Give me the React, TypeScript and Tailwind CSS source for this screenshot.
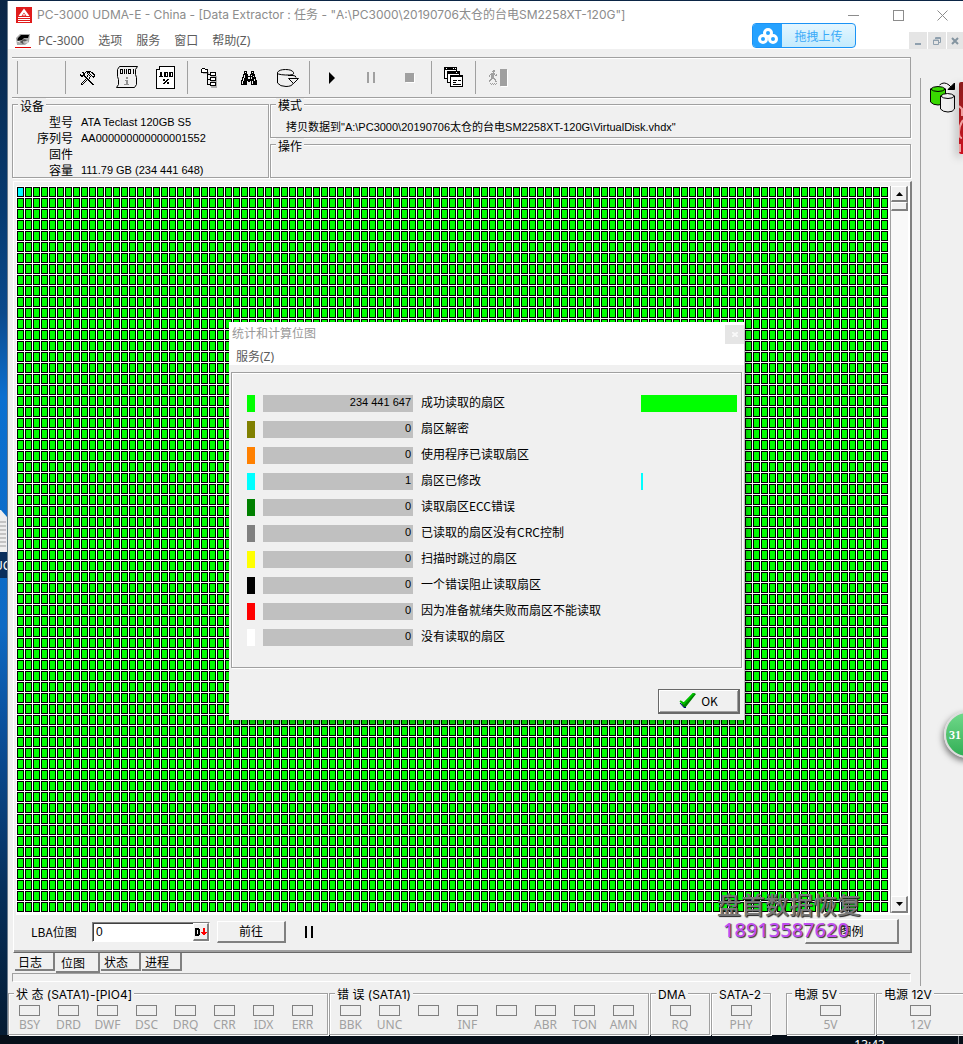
import { useState } from 'react';
import type { ReactNode } from 'react';

interface SectorStat {
  label: string;
  count: string;
  color: string;
  bar?: number;
}

const stats: SectorStat[] = [
  { label: '成功读取的扇区', count: '234 441 647', color: 'bg-[#00ff00]', bar: 96 },
  { label: '扇区解密', count: '0', color: 'bg-[#808000]' },
  { label: '使用程序已读取扇区', count: '0', color: 'bg-[#ff8000]' },
  { label: '扇区已修改', count: '1', color: 'bg-[#00ffff]', bar: 2 },
  { label: '读取扇区ECC错误', count: '0', color: 'bg-[#008000]' },
  { label: '已读取的扇区没有CRC控制', count: '0', color: 'bg-[#808080]' },
  { label: '扫描时跳过的扇区', count: '0', color: 'bg-[#ffff00]' },
  { label: '一个错误阻止读取扇区', count: '0', color: 'bg-black' },
  { label: '因为准备就绪失败而扇区不能读取', count: '0', color: 'bg-[#ff0000]' },
  { label: '没有读取的扇区', count: '0', color: 'bg-white' },
];

const device = [
  ['型号', 'ATA Teclast 120GB S5'],
  ['序列号', 'AA000000000000001552'],
  ['固件', ''],
  ['容量', '111.79 GB (234 441 648)'],
];

// one character per pixel: # ink, o grey, . empty
const Bitmap = ({ rows, ink = '#000' }: { rows: string[]; ink?: string }) => (
  <svg
    width={rows[0].length}
    height={rows.length}
    shapeRendering="crispEdges"
    aria-hidden="true"
  >
    {rows.map((row, y) =>
      row.split('').map((c, x) =>
        c === '.' ? null : (
          <rect
            key={`${x}-${y}`}
            x={x}
            y={y}
            width="1"
            height="1"
            fill={c === 'o' ? '#808080' : ink}
          />
        )
      )
    )}
  </svg>
);

const TOOLS = [
  '......#####.....',
  '..##.#.###.##...',
  '...##..#.#..##..',
  '#..##...#.#..##.',
  '#####..#.#.#..#.',
  '.##.##.#..#.###.',
  '.....##..#...#..',
  '......##.#......',
  '.....#.##.......',
  '....#.#.##......',
  '...#.#...##.....',
  '..#.#.....##....',
  '.#.#.......##...',
  '.##.........##..',
];

const BINOCULARS = [
  '...###....###...',
  '...#.#....#.#...',
  '...###....###...',
  '..#####..#####..',
  '..#.###..#.###..',
  '..#.########.#..',
  '.##.###..#.####.',
  '.#.####..#.####.',
  '.#.##########.#.',
  '##.##########.##',
  '#.####.##.#.####',
  '#.####....#.####',
  '#.####....#.####',
  '######....######',
];

const RUNNER = [
  '....##...',
  '...###...',
  '....#....',
  '..####...',
  '.#####.#.',
  '#.###.##.',
  '#.###....',
  '..###....',
  '..####...',
  '.##..##..',
  '##....#..',
  '#.....##.',
];

const ToolsIcon = () => <Bitmap rows={TOOLS} />;
const BinocularsIcon = () => <Bitmap rows={BINOCULARS} />;

const ScrollIcon = () => (
  <svg width="22" height="23" viewBox="0 0 22 23" fill="none" aria-hidden="true">
    <path
      d="M3.500 .5H21.500L19.500 3.500V8.500L20.500 11.500V18.500L18.500 21.500H.5L2.500 18.500V13.500L1.500 10.500V3.500Z"
      fill="#f0f0f0"
      stroke="#000"
    />
    <g shapeRendering="crispEdges" fill="none" stroke="#000">
      <rect x="4.500" y="3.500" width="2" height="4" />
      <path d="M8.500 3V8M10.500 3V8M17.500 3V8" />
      <rect x="12.500" y="3.500" width="2" height="4" />
    </g>
    <path d="M10 11h2v2h-2zM9 14h3v4h1v1H8v-1h2v-3H9z" fill="#909090" shapeRendering="crispEdges" />
  </svg>
);

const PercentIcon = () => (
  <svg width="19" height="23" viewBox="0 0 19 23" shapeRendering="crispEdges" aria-hidden="true">
    <path d="M3 0H19V23H0V3H3Z" fill="#000" />
    <path d="M4 1H18V22H1V4H4Z" fill="#fff" />
    <path
      d="M4 6h2v4h1v1H3v-1h1V7H3zM8 6h4v5H8zM13 6h4v5h-4zM7 13h2v2H7zM11 13h2v1h-2zM10 14h2v1h-2zM9 15h2v1H9zM8 16h2v1H8zM7 17h2v1H7zM11 16h2v2h-2z"
      fill="#000"
    />
    <path d="M10 7h1v3h-1zM15 7h1v3h-1z" fill="#fff" />
  </svg>
);

const TreeIcon = () => (
  <svg width="17" height="20" viewBox="0 0 17 20" shapeRendering="crispEdges" aria-hidden="true">
    <path d="M2 4h6v2H2zM10 8h6v12h-6z" fill="#b0b0b0" />
    <g fill="#fff" stroke="#000">
      <path d="M.5 1.500L1.500.5H3.500L4.500 1.500H6.500V4.500H.5Z" />
      <path d="M6.500 4V16.500H9M6.500 6.500H9M6.500 11.500H9" fill="none" />
      <path d="M9.500 4.500H14.500V7.500H9.500ZM9.500 9.500H14.500V12.500H9.500ZM9.500 14.500H14.500V17.500H9.500Z" />
    </g>
  </svg>
);

const DriveIcon = () => (
  <svg width="22" height="18" viewBox="0 0 22 18" fill="none" stroke="#000" aria-hidden="true">
    <path d="M.5 3.500V14Q3 17.500 9 17.500T16.500 14V13M.5 3.500Q2 .5 8.500.5T16.500 3.500 8.500 6 .5 3.500Z" />
    <path d="M11 6.500H16Q19 6.500 19 8.500M11.500 9.500H21.500L16.500 14.500Z" fill="#f0f0f0" />
  </svg>
);

const WindowsIcon = () => (
  <svg width="20" height="21" viewBox="0 0 20 21" shapeRendering="crispEdges" aria-hidden="true">
    <g fill="#fff" stroke="#000">
      <rect x=".5" y=".5" width="12" height="11" />
      <rect x="3.500" y="4.500" width="12" height="11" />
      <rect x="6.500" y="8.500" width="12" height="11" />
    </g>
    <path d="M1 1h11v2H1zM4 5h11v2H4zM7 9h11v1H7zM9 13h4v1H9zM14 13h3v1h-3zM9 15h3v1H9zM9 17h8v1H9z" />
    <path d="M2 1h1v1H2zM9 1h1v1H9zM11 1h1v1h-1zM12 5h1v1h-1z" fill="#fff" />
  </svg>
);

const ExitIcon = () => (
  <div className="flex gap-[2px]">
    <div className="pt-px">
      <Bitmap
        rows={[...RUNNER, '.........', '.#.#.#.#.', '..#.#.#..']}
        ink="#a0a0a0"
      />
    </div>
    <div className="h-[17px] w-[7px] bg-[#a0a0a0] shadow-[1px_1px_0_#fff]" />
  </div>
);

const Logo = () => (
  <svg width="16" height="16" viewBox="0 0 16 16" aria-hidden="true">
    <rect width="16" height="16" fill="#e01b1b" />
    <path d="M8 1.500L13.500 9H10.500L8 5.500 5.500 9H2.500ZM2 10h12v1H2zM2 12h12v1H2zM2 14h12v1H2z" fill="#fff" />
    <path d="M6.500 8.500L8 6.500 9.500 8.500Z" fill="#fff" />
  </svg>
);

const MenuLogo = () => (
  <svg width="16" height="14" viewBox="0 0 16 14" aria-hidden="true">
    <path d="M1 4L5 0H15L14 8 10 11H2Z" fill="#a8a8a8" />
    <path d="M3 4L6 1H14L13 4 9 4 7 6 2 7Z" fill="#000" />
    <path d="M5 8L9 5 12 6 8 10Z" fill="#555" />
    <path d="M2 7L5 8M8 8H13" stroke="#eee" />
    <path d="M0 13H16V14H0Z" fill="#e00000" />
  </svg>
);

const CopyDrivesIcon = () => (
  <svg width="26" height="31" viewBox="0 0 26 31" stroke="#000" aria-hidden="true">
    <path d="M.5 7V20Q3 23 8 23T15.500 20V7Q13 4.500 8 4.500T.5 7Z" fill="#38d800" />
    <path d="M.5 7Q3 9.500 8 9.500T15.500 7" fill="none" />
    <path d="M10.500 14V27Q13 30 18 30T24.500 27V14Q22 11.500 17.500 11.500T10.500 14Z" fill="#f0f0f0" />
    <path d="M10.500 14Q13 16.500 18 16.500T24.500 14" fill="none" />
    <path d="M9.500 3Q14 -1 19 3L21 5" fill="none" />
    <path d="M24.500 1V7.500H18Z" fill="#000" />
  </svg>
);

const toolbar: { name: string; icon: ReactNode; disabled?: boolean }[][] = [
  [
    { name: '工具', icon: <ToolsIcon /> },
    { name: '信息', icon: <ScrollIcon /> },
    { name: '百分比', icon: <PercentIcon /> },
  ],
  [
    { name: '结构', icon: <TreeIcon /> },
    { name: '查找', icon: <BinocularsIcon /> },
    { name: '驱动器', icon: <DriveIcon /> },
  ],
  [
    {
      name: '开始',
      icon: (
        <svg width="6" height="12" aria-hidden="true">
          <path d="M0 0L6 6L0 12Z" />
        </svg>
      ),
    },
    {
      name: '暂停',
      icon: <span className="block h-[11px] w-2 border-x-2 border-[#a0a0a0]" />,
      disabled: true,
    },
    {
      name: '停止',
      icon: <span className="block size-[9px] bg-[#a0a0a0] shadow-[1px_1px_0_#fff]" />,
      disabled: true,
    },
  ],
  [{ name: '窗口', icon: <WindowsIcon /> }],
  [{ name: '退出', icon: <ExitIcon />, disabled: true }],
];

const Toolbar = () => (
  <div className="mr-px flex h-[41px] items-stretch border-y border-r border-[#a0a0a0] py-[3px] pl-[5px] shadow-[0_1px_0_#fff,inset_0_1px_0_#fff]">
    <div className="w-12 border-l border-[#a0a0a0]" />
    {toolbar.map((group, i) => (
      <div key={i} className="flex items-center border-l border-[#a0a0a0] px-[2px]">
        {group.map((item) => (
          <button
            key={item.name}
            aria-label={item.name}
            disabled={item.disabled}
            className="flex h-8 w-[39px] items-center justify-center"
          >
            {item.icon}
          </button>
        ))}
      </div>
    ))}
  </div>
);

interface GroupProps {
  title?: string;
  className?: string;
  children?: ReactNode;
}

const Group = ({ title, className = '', children }: GroupProps) => (
  <section
    className={`relative border border-[#a0a0a0] shadow-[1px_1px_0_#fff,inset_1px_1px_0_#fff] ${className}`}
  >
    {title && (
      <h2 className="absolute -top-[7px] left-[5px] whitespace-nowrap bg-[#f0f0f0] px-[2px] text-[12px] leading-4">
        {title}
      </h2>
    )}
    {children}
  </section>
);

const Leds = ({ names }: { names: string[] }) => (
  <div
    className={`flex pt-[11px] font-['Noto_Sans',sans-serif] ${
      names.length > 1 ? 'pl-px' : 'justify-center'
    }`}
  >
    {names.map((name, i) => (
      <div key={i} className="flex w-[39px] flex-col items-center text-[#a0a0a0]">
        <span className="h-[11px] w-[21px] border border-[#808080]" />
        <span className="leading-[18px]">{name}</span>
      </div>
    ))}
  </div>
);

const SectorMap = () => (
  <svg className="h-[727px] min-w-0 flex-1 bg-white" shapeRendering="crispEdges" role="img" aria-label="位图">
    <defs>
      <pattern id="sector" x="1" y="1" width="8" height="11" patternUnits="userSpaceOnUse">
        <rect width="7" height="10" fill="#000" />
        <rect x="1" y="1" width="5" height="8" fill="#00ff00" />
      </pattern>
    </defs>
    <rect x="1" y="1" width="100%" height="100%" fill="url(#sector)" />
    <rect x="2" y="2" width="5" height="8" fill="#00ffff" />
  </svg>
);

const raised =
  'bg-[#f0f0f0] border-t border-l border-t-white border-l-white border-r-2 border-b-2 border-r-[#808080] border-b-[#808080]';

const ScrollBar = () => (
  <div className="ml-px mr-[2px] flex w-[18px] flex-col border-l border-[#a0a0a0] bg-[#f8f8f8]">
    <button aria-label="向上" className={`flex h-4 items-center justify-center ${raised}`}>
      <svg width="7" height="4" aria-hidden="true">
        <path d="M0 4L3.500 0L7 4Z" />
      </svg>
    </button>
    <div className={`h-[9px] ${raised}`} />
    <div className="flex-1" />
    <button aria-label="向下" className={`flex h-[17px] items-center justify-center ${raised}`}>
      <svg width="7" height="4" aria-hidden="true">
        <path d="M0 0L3.500 4L7 0Z" />
      </svg>
    </button>
  </div>
);

const BitmapPanel = () => {
  const [lba, setLba] = useState('0');

  return (
    <div className="ml-px mt-[3px] border-b border-l border-r-2 border-t border-b-[#696969] border-l-white border-r-[#808080] border-t-white">
      <div className="border-b-2 border-[#a0a0a0] pl-[2px] pt-1">
        <div className="flex bg-white pb-[2px]">
          <SectorMap />
          <ScrollBar />
        </div>
        <div className="flex h-[35px] items-center pb-[2px] pr-[11px]">
          <label htmlFor="lba" className="w-[76px] pl-[15px]">
            LBA位图
          </label>
          <div className="flex h-5 w-[118px] border border-b-white border-l-[#808080] border-r-white border-t-[#808080] bg-white">
            <input
              id="lba"
              value={lba}
              onChange={(e) => setLba(e.target.value)}
              className="min-w-0 flex-1 border-l border-t border-[#404040] px-[2px] font-['Liberation_Sans'] outline-none"
            />
            <button aria-label="十进制" className={`flex w-4 items-center justify-center ${raised}`}>
              <svg width="12" height="9" shapeRendering="crispEdges" aria-hidden="true">
                <path d="M0 1H4V2H5V8H4V9H0ZM2 3V7H3V3Z" fillRule="evenodd" />
                <path d="M8 1H10V5H12V6H11V7H10V8H8V7H7V6H6V5H8Z" fill="#f00" />
              </svg>
            </button>
          </div>
          <button className={`ml-[7px] h-[22px] w-[69px] ${raised}`}>前往</button>
          <button aria-label="暂停" className="ml-[19px] h-3 w-2 border-x-2 border-black" />
          <button className={`ml-auto h-[25px] w-[94px] ${raised}`}>图例</button>
        </div>
      </div>
    </div>
  );
};

const tabs = ['日志', '位图', '状态', '进程'];

const Tabs = () => {
  const [active, setActive] = useState('位图');

  return (
    <div role="tablist" className="flex h-5 items-start gap-px pl-[3px]">
      {tabs.map((tab) => (
        <button
          key={tab}
          role="tab"
          aria-selected={tab === active}
          onClick={() => setActive(tab)}
          className={`border-b-2 border-r-2 border-b-[#808080] border-r-[#808080] pr-2 ${
            tab === active ? 'h-5 w-11 pt-px' : 'h-[18px] w-10'
          }`}
        >
          {tab}
        </button>
      ))}
    </div>
  );
};

const TitleBar = () => (
  <header className="bg-white font-['Noto_Sans','Noto_Sans_CJK_SC',sans-serif]">
    <div className="flex h-7 items-center pl-2 text-[#8c8c8c]">
      <Logo />
      <h1 className="ml-[5px] whitespace-nowrap font-['Inter','Noto_Sans_CJK_SC',sans-serif]">
        PC-3000 UDMA-E - China - [Data Extractor : 任务 - "A:\PC3000\20190706太仓的台电SM2258XT-120G"]
      </h1>
      <div className="ml-auto flex">
        <button aria-label="最小化" className="flex h-7 w-[45px] items-center justify-center">
          <span className="h-px w-[11px] bg-[#8c8c8c]" />
        </button>
        <button aria-label="最大化" className="flex h-7 w-[45px] items-center justify-center">
          <span className="size-[11px] border border-[#8c8c8c]" />
        </button>
        <button aria-label="关闭" className="flex h-7 w-[42px] items-center justify-center">
          <svg width="11" height="11" stroke="#8c8c8c" aria-hidden="true">
            <path d="M.5 .5L10.500 10.500M10.500 .5L.5 10.500" />
          </svg>
        </button>
      </div>
    </div>
    <div className="flex h-5 items-end">
      <nav className="flex items-center gap-[14px] pl-[7px] leading-4 text-[#5c5c5c]">
        <button className="flex items-center gap-[7px]">
          <MenuLogo />
          PC-3000
        </button>
        <button>选项</button>
        <button>服务</button>
        <button>窗口</button>
        <button>帮助(Z)</button>
      </nav>
      <div className="ml-auto flex gap-px">
        <button aria-label="最小化文档" className="flex h-[17px] w-[18px] items-end justify-center bg-[#e5e5e5] pb-1">
          <span className="h-[2px] w-[6px] bg-[#8fa0ae]" />
        </button>
        <button aria-label="还原文档" className="flex h-[17px] w-[18px] items-center justify-center bg-[#e5e5e5]">
          <svg width="8" height="8" fill="none" stroke="#8fa0ae" aria-hidden="true">
            <path d="M2.500 2V.5H7.500V5.500H6M.5 3H5.500V7.500H.5ZM0 3.500H6M2 1.500H8" />
          </svg>
        </button>
        <button aria-label="关闭文档" className="flex h-[17px] w-4 items-center justify-center bg-[#e5e5e5]">
          <svg width="8" height="8" stroke="#8494a0" strokeWidth="2" aria-hidden="true">
            <path d="M1 1L7 7M7 1L1 7" />
          </svg>
        </button>
      </div>
    </div>
  </header>
);

const StatsDialog = () => (
  <div
    role="dialog"
    aria-labelledby="stats-title"
    className="absolute left-[229px] top-[322px] w-[515px] bg-[#f0f0f0] pb-[6px] shadow-[3px_3px_8px_rgba(0,0,0,0.35)]"
  >
    <div className="h-[43px] bg-white font-['Noto_Sans','Noto_Sans_CJK_SC',sans-serif]">
      <div className="flex h-[22px] items-center justify-between pl-[3px] pt-[2px]">
        <h2 id="stats-title" className="text-[#999]">
          统计和计算位图
        </h2>
        <button aria-label="关闭" className="flex h-[19px] w-[19px] items-center justify-center bg-[#e5e5e5]">
          <svg width="6" height="5" stroke="#f8f8f8" strokeWidth="2" aria-hidden="true">
            <path d="M0 0L6 5M6 0L0 5" />
          </svg>
        </button>
      </div>
      <button className="ml-[7px] block pt-[5px] leading-4 text-[#5c5c5c]">服务(Z)</button>
    </div>
    <Group className="mx-[2px] mt-[7px] flex h-[296px] flex-col gap-[9px] pl-[15px] pr-1 pt-[22px]">
      {stats.map((stat) => (
        <div key={stat.label} className="flex h-[17px] gap-2 leading-[14px]">
          <span className={`w-2 ${stat.color}`} />
          <span className="w-[150px] bg-[#c0c0c0] pr-[2px] text-right font-['Liberation_Sans'] text-[11px]">
            {stat.count}
          </span>
          <span>{stat.label}</span>
          <span className="ml-auto w-24">
            {stat.bar && <span className={`block h-full ${stat.color}`} style={{ width: stat.bar }} />}
          </span>
        </div>
      ))}
    </Group>
    <div className="mr-1 mt-[21px] flex justify-end">
      <button className="flex h-[25px] w-[82px] items-center justify-center gap-1 border-b-2 border-l border-r-2 border-t border-[#696969] shadow-[inset_1px_1px_0_#fff,inset_-1px_-1px_0_#a0a0a0]">
        <svg width="18" height="16" aria-hidden="true">
          <path d="M1 8L5 9.500L15 0L17 1L6 15H5Z" fill="#008000" />
          <path d="M1 8L5 10.500L15 0" stroke="#00c000" strokeWidth="2" fill="none" />
          <path d="M1 10L5 14.500H7" stroke="#000080" fill="none" />
        </svg>
        OK
      </button>
    </div>
  </div>
);

const UploadWidget = () => (
  <button className="absolute left-[752px] top-[23px] flex h-[25px] w-[104px] items-stretch overflow-hidden rounded-[4px] border border-[#1b93f5] bg-linear-to-b from-[#e4f6ff] to-[#c4ebfd] text-[#3aaaf8]">
    <span className="flex w-[29px] items-center justify-center bg-[#26a2ff]">
      <svg width="20" height="16" fill="none" stroke="#fff" strokeWidth="3" aria-hidden="true">
        <circle cx="10" cy="5" r="3.500" />
        <circle cx="5" cy="11" r="3.500" />
        <circle cx="15" cy="11" r="3.500" />
      </svg>
    </span>
    <span className="flex flex-1 items-center justify-center">拖拽上传</span>
  </button>
);

const Watermark = () => (
  <div className="pointer-events-none absolute left-[717px] top-[890px] whitespace-nowrap">
    <p className="text-[24px] font-medium leading-7 text-[#777] [text-shadow:1px_1px_1px_#222]">
      盘首数据恢复
    </p>
    <p className="pl-[6px] font-['Noto_Sans'] text-[20px] font-medium leading-6 text-[#c04cf0] [text-shadow:1px_1px_1px_#333]">
      18913587620
    </p>
  </div>
);

const App = () => {
  return (
    <div className="relative flex min-h-screen flex-col overflow-hidden bg-[linear-gradient(#0b2545_0%,#063a70_20%,#0a4a8c_30%,#0a70d0_38%,#0d6ac4_60%,#0a4f9a_70%,#06305c_85%,#051a30_100%)] pt-px font-['Noto_Sans_CJK_SC',sans-serif] text-[12px] text-black">
      <main className="ml-[7px] flex flex-1 flex-col border-l border-[#6b7b8c] bg-[#f0f0f0]">
        <TitleBar />
        <div className="flex">
          <div className="min-w-0 flex-1 pb-1 pl-1 pt-2">
            <Toolbar />
            <div className="mr-px mt-[6px] flex h-[74px] gap-px">
              <Group title="设备" className="w-[257px]">
                <dl className="grid grid-cols-[60px_1fr] gap-x-2 pt-[9px] leading-4">
                  {device.map(([label, value]) => (
                    <div key={label} className="contents">
                      <dt className="h-4 text-right">{label}</dt>
                      <dd className="h-4 font-['Liberation_Sans'] text-[11px]">{value}</dd>
                    </div>
                  ))}
                </dl>
              </Group>
              <div className="flex flex-1 flex-col gap-[6px]">
                <Group
                  title="模式"
                  className="h-[34px] pl-[15px] pt-[14px] font-['Liberation_Sans','Noto_Sans_CJK_SC',sans-serif] text-[11px] leading-4"
                >
                  拷贝数据到"A:\PC3000\20190706太仓的台电SM2258XT-120G\VirtualDisk.vhdx"
                </Group>
                <Group title="操作" className="h-[34px]" />
              </div>
            </div>
            <BitmapPanel />
            <Tabs />
            <div className="mr-px h-[9px] border border-b-white border-l-[#a0a0a0] border-r-white border-t-[#a0a0a0]" />
          </div>
          <aside className="ml-2 mt-[29px] w-[43px] border-l border-[#a0a0a0] pl-[9px] pt-1">
            <button aria-label="复制磁盘">
              <CopyDrivesIcon />
            </button>
          </aside>
        </div>
        <footer className="mt-[7px] flex gap-px font-['Inter','Noto_Sans_CJK_SC',sans-serif]">
          <Group title="状 态 (SATA1)-[PIO4]" className="h-[42px] w-[320px] shrink-0">
            <Leds names={['BSY', 'DRD', 'DWF', 'DSC', 'DRQ', 'CRR', 'IDX', 'ERR']} />
          </Group>
          <Group title="错 误 (SATA1)" className="h-[42px] w-[320px] shrink-0">
            <Leds names={['BBK', 'UNC', '', 'INF', '', 'ABR', 'TON', 'AMN']} />
          </Group>
          <Group title="DMA" className="h-[42px] w-[60px] shrink-0">
            <Leds names={['RQ']} />
          </Group>
          <Group title="SATA-2" className="h-[42px] w-[60px] shrink-0">
            <Leds names={['PHY']} />
          </Group>
          <Group title="电源 5V" className="ml-[14px] h-[42px] w-[89px] shrink-0">
            <Leds names={['5V']} />
          </Group>
          <Group title="电源 12V" className="h-[42px] w-[89px] shrink-0">
            <Leds names={['12V']} />
          </Group>
        </footer>
      </main>
      <div className="flex h-[9px] justify-end overflow-hidden bg-[#060e18] pr-1 font-['Noto_Sans'] leading-4 text-white">
        <time className="mr-[73px] pt-[2px]">13:43</time>
        <span className="w-px bg-[#8a8f96]" />
      </div>

      <StatsDialog />
      <UploadWidget />
      <Watermark />

      {/* desktop bits showing from behind and beside the window */}
      <div className="absolute left-0 top-[510px] w-[7px] overflow-hidden">
        <svg width="7" height="42" className="block" aria-hidden="true">
          <path d="M0 0H1L7 7V42H0Z" fill="#eee" />
          <path d="M0 12H6M0 16H6M0 20H6M0 24H6M0 28H6M0 32H6M0 36H6" stroke="#999" />
        </svg>
        <div className="bg-[#0a2f5c] pb-1 pt-[6px]">
          <span className="-ml-[6px] block font-['Noto_Sans'] leading-4 text-white">UC</span>
        </div>
      </div>
      <div className="absolute right-0 top-[82px] h-[72px] w-1 overflow-hidden rounded-l-[2px] bg-linear-to-b from-[#8c1c1c] to-[#cc1020] shadow-[-2px_3px_8px_rgba(0,0,0,0.35)]">
        <svg width="4" height="72" fill="none" stroke="#f0a0a0" aria-hidden="true">
          <path d="M0 24L3 27V34M4 38Q0 44 0 50T3 56M1 62V70" strokeWidth="2" />
        </svg>
      </div>
      <div className="absolute -right-7 top-[711px] flex size-[47px] items-center rounded-full border-2 border-[#ddd] bg-linear-to-b from-[#6fd98a] to-[#2fae55] pl-[3px] font-['Liberation_Serif'] text-[12px] font-bold text-white shadow-[-1px_3px_6px_rgba(0,0,0,0.5)]">
        31
      </div>
    </div>
  );
};

export default App;
